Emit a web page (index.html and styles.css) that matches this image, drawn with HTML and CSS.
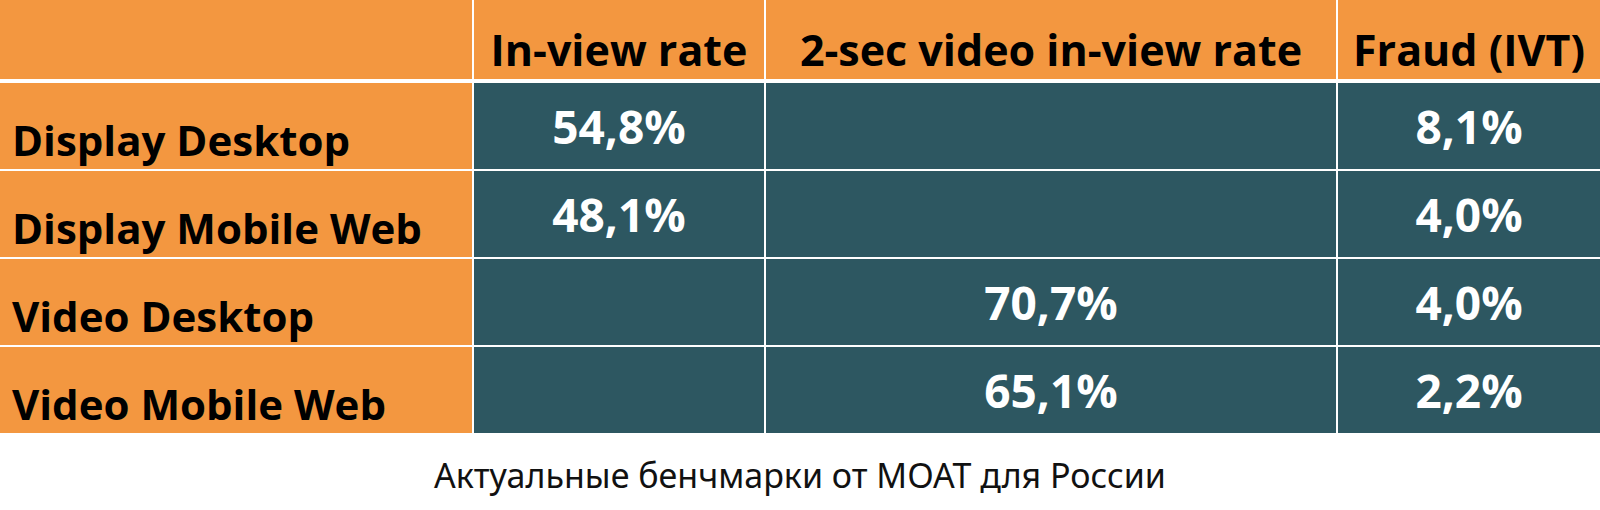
FILE: index.html
```html
<!DOCTYPE html>
<html lang="ru">
    <head>
        <meta charset="UTF-8">
        <title>MOAT benchmarks</title>
        <link rel="stylesheet" href="styles.css">
    </head>
    <body>
        <div class="bench">
            <div class="bench-head">
                <div class="cell corner"></div>
                <div class="cell head">In-view rate</div>
                <div class="cell head">2-sec video in-view rate</div>
                <div class="cell head">Fraud (IVT)</div>
            </div>
            <div class="bench-body">
                <div class="cell label">Display Desktop</div>
                <div class="cell value">54,8%</div>
                <div class="cell value"></div>
                <div class="cell value">8,1%</div>

                <div class="cell label">Display Mobile Web</div>
                <div class="cell value">48,1%</div>
                <div class="cell value"></div>
                <div class="cell value">4,0%</div>

                <div class="cell label">Video Desktop</div>
                <div class="cell value"></div>
                <div class="cell value">70,7%</div>
                <div class="cell value">4,0%</div>

                <div class="cell label">Video Mobile Web</div>
                <div class="cell value"></div>
                <div class="cell value">65,1%</div>
                <div class="cell value">2,2%</div>
            </div>
        </div>
        <p class="caption">Актуальные бенчмарки от MOAT для России</p>
    </body>
</html>
```

FILE: styles.css
```css
body {
    margin: 0;
    background: #fff;
    font-family: "Open Sans", "Noto Sans", sans-serif;
    color: #000;
}

.bench {
    width: 1600px;
}

.bench-head,
.bench-body {
    display: grid;
    grid-template-columns: 472px 290px 570px 262px;
    column-gap: 2px;
    row-gap: 2px;
    background: #fff;
}

.bench-head {
    grid-template-rows: 79px;
    margin-bottom: 4px;
}

.bench-body {
    grid-auto-rows: 86px;
}

.cell {
    background: #f39740;
    font-weight: 700;
    box-sizing: border-box;
    line-height: normal;
}

.head {
    display: flex;
    align-items: flex-end;
    justify-content: center;
    font-size: 43px;
}

.label {
    display: flex;
    align-items: flex-end;
    padding: 0 0 1px 12px;
    font-size: 42px;
}

.value {
    background: #2d5761;
    color: #fff;
    display: flex;
    align-items: center;
    justify-content: center;
    font-size: 46px;
}

.caption {
    margin: 19px 0 0;
    text-align: center;
    font-family: "Noto Sans", sans-serif;
    font-size: 34px;
    color: #111;
}
```
